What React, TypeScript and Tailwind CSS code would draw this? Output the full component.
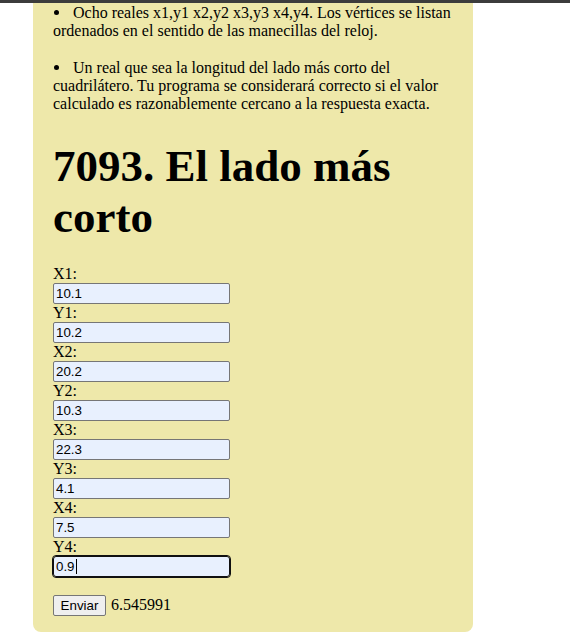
import React from "react";

const fields: [string, string][] = [
  ["X1", "10.1"],
  ["Y1", "10.2"],
  ["X2", "20.2"],
  ["Y2", "10.3"],
  ["X3", "22.3"],
  ["Y3", "4.1"],
  ["X4", "7.5"],
  ["Y4", "0.9"],
];

function Bullet() {
  return (
    <span className="inline-block w-[20px] align-baseline">
      <span className="inline-block w-[5px] h-[5px] rounded-full bg-black mb-[3px] ml-[1px] align-middle" />
    </span>
  );
}

export default function App() {
  return (
    <div className="min-h-[632px] w-[570px] bg-white overflow-hidden">
      <div className="h-[3px] bg-[#3c3c3c]" />
      <div className="ml-[33px] w-[440px] bg-[#EEE8AA] rounded-b-[8px] pl-[20px] pr-[16px] pt-[1px] pb-[16px] font-['Liberation_Serif',serif] text-[16px] leading-[18px] text-black">
        <ul>
          <li className="whitespace-nowrap">
            <Bullet />Ocho reales x1,y1 x2,y2 x3,y3 x4,y4. Los vértices se listan
            <br />
            ordenados en el sentido de las manecillas del reloj.
          </li>
          <li className="mt-[19px] whitespace-nowrap">
            <Bullet />Un real que sea la longitud del lado más corto del
            <br />
            cuadrilátero. Tu programa se considerará correcto si el valor
            <br />
            calculado es razonablemente cercano a la respuesta exacta.
          </li>
        </ul>
        <h1 className="mt-[28px] text-[45px] leading-[51px] font-bold">
          7093. El lado más
          <br />
          corto
        </h1>
        <form className="mt-[22px] flex flex-col" onSubmit={(e) => e.preventDefault()}>
          {fields.map(([label, value], i) => {
            const focused = i === fields.length - 1;
            return (
              <div key={label} className="flex flex-col">
                <label className="h-[18px] leading-[18px]">{label}:</label>
                <div
                  className={
                    focused
                      ? "h-[21px] w-[177px] bg-[#E8F0FE] border border-[#101010] outline outline-1 outline-[#101010] rounded-[3px] pl-[2px] flex items-center font-['Liberation_Sans',Arial,sans-serif] text-[13.33px] leading-[15px] text-black"
                      : "h-[21px] w-[177px] bg-[#E8F0FE] border border-[#767676] rounded-[2px] pl-[2px] flex items-center font-['Liberation_Sans',Arial,sans-serif] text-[13.33px] leading-[15px] text-black"
                  }
                >
                  <span>{value}</span>
                  {focused && <span className="inline-block w-[1px] h-[15px] bg-black ml-[1px]" />}
                </div>
              </div>
            );
          })}
          <div className="mt-[18px] flex items-baseline gap-[5px]">
            <button
              type="submit"
              className="h-[21px] w-[53px] bg-[#EFEFEF] border border-[#767676] rounded-[2px] font-['Liberation_Sans',Arial,sans-serif] text-[13.33px] leading-[15px] text-black"
            >
              Enviar
            </button>
            <span>6.545991</span>
          </div>
        </form>
      </div>
    </div>
  );
}
